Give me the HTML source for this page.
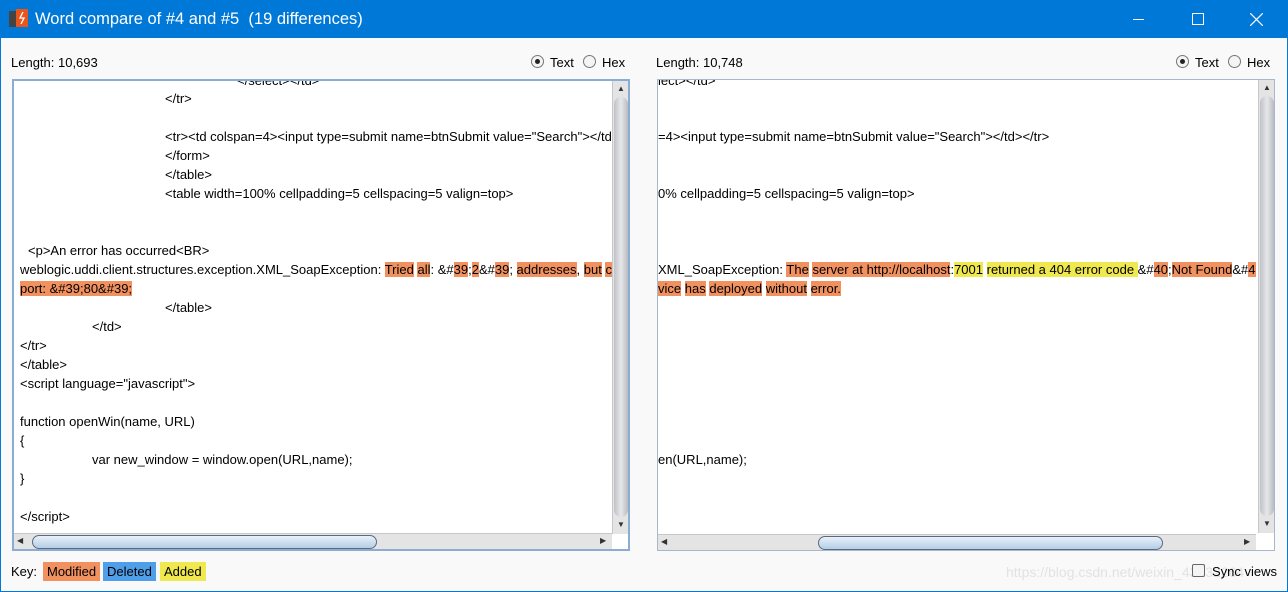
<!DOCTYPE html>
<html><head><meta charset="utf-8"><style>
*{margin:0;padding:0;box-sizing:border-box}
body{width:1288px;height:592px;overflow:hidden;background:#f9f9f9;font-family:"Liberation Sans",Arial,sans-serif;font-size:13px;color:#000;position:relative}
.title{position:absolute;left:0;top:0;width:1288px;height:38px;background:#0078d7;color:#fff;font-size:16.5px}
.title .t{position:absolute;left:35px;top:10px}
.frame{position:absolute;left:0;top:38px;width:1288px;height:554px;border:1px solid #0078d7;border-top:none}
.abs{position:absolute;white-space:pre}
.box{position:absolute;top:79px;width:618px;height:472px;border:1px solid #a8b8cc;background:#fff}
.box.l{left:12px;border:2px solid #8cacd4}
.box.r{left:657px}
.txt{position:absolute;left:0;top:0;width:598px;height:453px;overflow:hidden}
.ln{position:absolute;white-space:pre;height:18px;line-height:18px}
.m{background:#f29160}.a{background:#efe84f}.d{background:#4f9eea}
.vs{position:absolute;right:0;top:0;width:16px;height:453px;background:#e4e4e4;border-left:1px solid #c8c8c8}
.vt{position:absolute;left:1px;top:16px;width:14px;height:420px;border-radius:7px;background:linear-gradient(90deg,#bfc2c7,#e6e7ea 50%,#b8bbc0)}
.hs{position:absolute;left:0;bottom:0;width:598px;height:16px;background:#e4e4e4;border-top:1px solid #c8c8c8}
.ht{position:absolute;top:1px;height:14px;border-radius:7px;border:1px solid #5a6a80;background:linear-gradient(#e8f1fa,#b4cde4)}
.arr{position:absolute;font-size:8px;color:#333}
.radio{position:absolute;width:13px;height:13px;border-radius:50%;border:1px solid #777;background:#f4f4f4}
.radio.on::after{content:"";position:absolute;left:3px;top:3px;width:5px;height:5px;border-radius:50%;background:#222}
.key{position:absolute;top:562px;height:19px;line-height:19px;padding:0 4px}
</style></head><body>
<div class="title">
<svg style="position:absolute;left:9px;top:9px" width="22" height="20"><rect x="0" y="2" width="9" height="16" fill="#444"/><rect x="7" y="0" width="12" height="18" fill="#e8561c"/><path d="M14 3 L11 9 L15 9 L12 15" stroke="#fff" stroke-width="1.3" fill="none"/></svg>
<span class="t">Word compare of #4 and #5&nbsp; (19 differences)</span>
<div style="position:absolute;left:1133px;top:19px;width:11px;height:1px;background:#fff"></div>
<div style="position:absolute;left:1192px;top:13px;width:12px;height:12px;border:1px solid #fff"></div>
<svg style="position:absolute;left:1250px;top:13px" width="13" height="13"><path d="M0 0L13 13M13 0L0 13" stroke="#fff" stroke-width="1.2"/></svg>
</div>
<div class="frame"></div>

<div class="abs" style="left:11px;top:55px">Length: 10,693</div>
<div class="radio on" style="left:531px;top:55px"></div><div class="abs" style="left:550px;top:55px">Text</div>
<div class="radio" style="left:583px;top:55px"></div><div class="abs" style="left:602px;top:55px">Hex</div>
<div class="abs" style="left:656px;top:55px">Length: 10,748</div>
<div class="radio on" style="left:1176px;top:55px"></div><div class="abs" style="left:1195px;top:55px">Text</div>
<div class="radio" style="left:1228px;top:55px"></div><div class="abs" style="left:1247px;top:55px">Hex</div>

<div class="box l"><div class="txt">
<div class="ln" style="left:223px;top:-9px">&lt;/select&gt;&lt;/td&gt;</div>
<div class="ln" style="left:151px;top:9px">&lt;/tr&gt;</div>
<div class="ln" style="left:151px;top:47px">&lt;tr&gt;&lt;td colspan=4&gt;&lt;input type=submit name=btnSubmit value="Search"&gt;&lt;/td&gt;&lt;/tr&gt;</div>
<div class="ln" style="left:151px;top:66px">&lt;/form&gt;</div>
<div class="ln" style="left:151px;top:85px">&lt;/table&gt;</div>
<div class="ln" style="left:151px;top:104px">&lt;table width=100% cellpadding=5 cellspacing=5 valign=top&gt;</div>
<div class="ln" style="left:14px;top:161px">&lt;p&gt;An error has occurred&lt;BR&gt;</div>
<div class="ln" style="left:6px;top:180px">weblogic.uddi.client.structures.exception.XML_SoapException: <span class="m">Tried</span> <span class="m">all</span>: &amp;#<span class="m">39</span>;<span class="m">2</span>&amp;#<span class="m">39</span>; <span class="m">addresses</span>, <span class="m">but</span> <span class="m">could</span></div>
<div class="ln" style="left:6px;top:199px"><span class="m">port: &amp;#39;80&amp;#39;</span></div>
<div class="ln" style="left:151px;top:218px">&lt;/table&gt;</div>
<div class="ln" style="left:78px;top:237px">&lt;/td&gt;</div>
<div class="ln" style="left:6px;top:256px">&lt;/tr&gt;</div>
<div class="ln" style="left:6px;top:275px">&lt;/table&gt;</div>
<div class="ln" style="left:6px;top:294px">&lt;script language="javascript"&gt;</div>
<div class="ln" style="left:6px;top:332px">function openWin(name, URL)</div>
<div class="ln" style="left:6px;top:351px">{</div>
<div class="ln" style="left:78px;top:370px">var new_window = window.open(URL,name);</div>
<div class="ln" style="left:6px;top:389px">}</div>
<div class="ln" style="left:6px;top:427px">&lt;/script&gt;</div>
</div>
<div class="vs"><span class="arr" style="left:4px;top:3px">▲</span><div class="vt"></div><span class="arr" style="left:4px;top:439px">▼</span></div>
<div class="hs"><span class="arr" style="left:3px;top:2px">◀</span><div class="ht" style="left:18px;width:345px"></div><span class="arr" style="left:586px;top:2px">▶</span></div>
</div>

<div class="box r"><div class="txt">
<div class="ln" style="left:0px;top:-8px">lect&gt;&lt;/td&gt;</div>
<div class="ln" style="left:0px;top:48px">=4&gt;&lt;input type=submit name=btnSubmit value="Search"&gt;&lt;/td&gt;&lt;/tr&gt;</div>
<div class="ln" style="left:0px;top:105px">0% cellpadding=5 cellspacing=5 valign=top&gt;</div>
<div class="ln" style="left:0px;top:181px">XML_SoapException: <span class="m">The</span> <span class="m">server at http://localhost</span>:<span class="a">7001</span> <span class="a">returned a 404 error code </span>&amp;#<span class="m">40</span>;<span class="m">Not Found</span>&amp;#<span class="m">41</span></div>
<div class="ln" style="left:0px;top:200px"><span class="m">vice</span> <span class="m">has</span> <span class="m">deployed</span> <span class="m">without</span> <span class="m">error.</span></div>
<div class="ln" style="left:0px;top:371px">en(URL,name);</div>
</div>
<div class="vs"><span class="arr" style="left:4px;top:3px">▲</span><div class="vt"></div><span class="arr" style="left:4px;top:439px">▼</span></div>
<div class="hs"><span class="arr" style="left:3px;top:2px">◀</span><div class="ht" style="left:160px;width:345px"></div><span class="arr" style="left:586px;top:2px">▶</span></div>
</div>

<div class="abs" style="left:11px;top:564px">Key:</div>
<div class="key m" style="left:43px">Modified</div>
<div class="key d" style="left:103px">Deleted</div>
<div class="key a" style="left:160px">Added</div>
<div class="abs" style="left:1006px;top:564px;color:#e2e2e2;font-size:14px">https://blog.csdn.net/weixin_43532264</div>
<div style="position:absolute;left:1192px;top:564px;width:13px;height:13px;border:1px solid #666;background:#f4f4f4;border-radius:2px"></div>
<div class="abs" style="left:1212px;top:564px">Sync views</div>
</body></html>
